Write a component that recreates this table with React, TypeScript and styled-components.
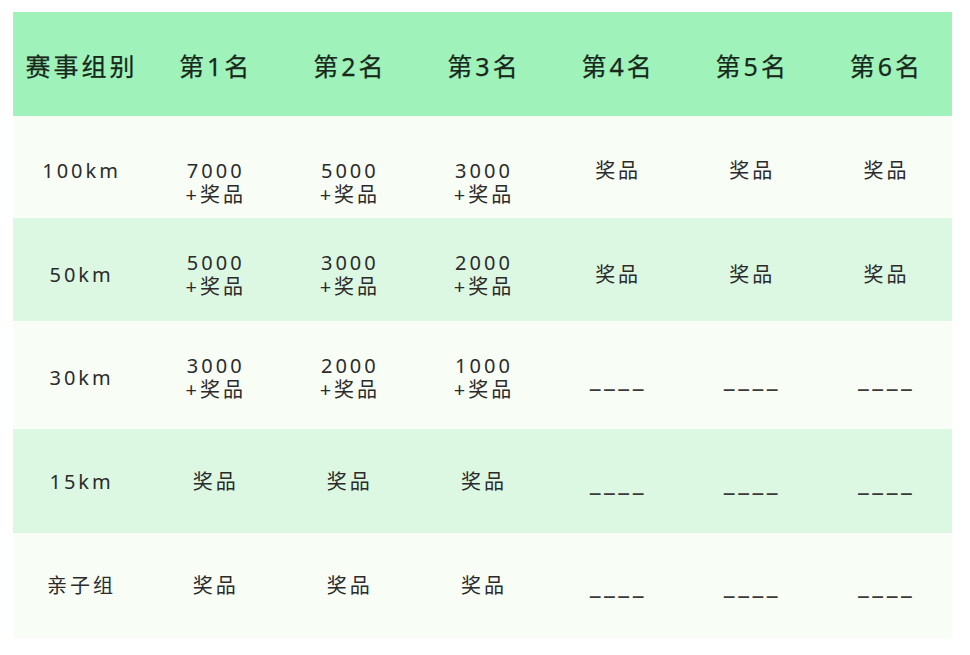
import React from 'react'
import styled, { createGlobalStyle } from 'styled-components'

const GlobalStyle = createGlobalStyle`
  html, body {
    margin: 0;
    padding: 0;
    background: #ffffff;
  }
  body {
    font-family: "Noto Sans", "Noto Sans CJK SC", sans-serif;
  }
`

const header = ['赛事组别', '第1名', '第2名', '第3名', '第4名', '第5名', '第6名']

type Row = {
  cells: string[][]
  height: number
  pad: number
  top?: boolean
  shade: 'light' | 'green'
}

const NONE = ['____']
const PRIZE = ['奖品']

const rows: Row[] = [
  {
    cells: [['100km'], ['7000', '+奖品'], ['5000', '+奖品'], ['3000', '+奖品'], PRIZE, PRIZE, PRIZE],
    height: 102,
    pad: 43,
    top: true,
    shade: 'light',
  },
  {
    cells: [['50km'], ['5000', '+奖品'], ['3000', '+奖品'], ['2000', '+奖品'], PRIZE, PRIZE, PRIZE],
    height: 103,
    pad: 10,
    shade: 'green',
  },
  {
    cells: [['30km'], ['3000', '+奖品'], ['2000', '+奖品'], ['1000', '+奖品'], NONE, NONE, NONE],
    height: 108,
    pad: 6,
    shade: 'light',
  },
  {
    cells: [['15km'], PRIZE, PRIZE, PRIZE, NONE, NONE, NONE],
    height: 104,
    pad: 2,
    shade: 'green',
  },
  {
    cells: [['亲子组'], PRIZE, PRIZE, PRIZE, NONE, NONE, NONE],
    height: 105,
    pad: 0,
    shade: 'light',
  },
]

const App = () => {
  return (
    <Page>
      <GlobalStyle />
      <Table>
        <HeadRow>
          {header.map((h) => (
            <HeadCell key={h}>{h}</HeadCell>
          ))}
        </HeadRow>
        {rows.map((r, i) => (
          <BodyRow key={i} $h={r.height} $pad={r.pad} $top={r.top} $shade={r.shade}>
            {r.cells.map((lines, j) => (
              <Cell key={j}>
                {lines.map((l, k) =>
                  l === '____' ? <Dash key={k}>{l}</Dash> : <Line key={k}>{l}</Line>
                )}
              </Cell>
            ))}
          </BodyRow>
        ))}
      </Table>
    </Page>
  )
}

export default App

const Page = styled.div`
  padding: 12px 18px 0 13px;
  width: 970px;
  box-sizing: border-box;
`

const Table = styled.div`
  display: flex;
  flex-direction: column;
  width: 939px;
`

const HeadRow = styled.div`
  display: grid;
  grid-template-columns: repeat(7, 1fr);
  align-items: center;
  height: 104px;
  padding-top: 4px;
  box-sizing: border-box;
  background: #9ff3ba;
`

const HeadCell = styled.div`
  text-align: center;
  font-size: 25px;
  font-weight: 400;
  letter-spacing: 3px;
  text-indent: 3px;
  color: #18291c;
  line-height: 30px;
  -webkit-text-stroke: 0.25px #18291c;
`

const BodyRow = styled.div<{ $h: number; $pad: number; $top?: boolean; $shade: 'light' | 'green' }>`
  display: grid;
  grid-template-columns: repeat(7, 1fr);
  align-items: ${(p) => (p.$top ? 'start' : 'center')};
  height: ${(p) => p.$h}px;
  padding-top: ${(p) => p.$pad}px;
  box-sizing: border-box;
  background: ${(p) => (p.$shade === 'light' ? '#f8fdf6' : '#ddf8e2')};
`

const Cell = styled.div`
  display: flex;
  flex-direction: column;
  align-items: center;
  color: #2b2b2b;
  font-size: 20px;
  letter-spacing: 3px;
  text-indent: 3px;
`

const Line = styled.div`
  line-height: 24px;
  white-space: nowrap;
`

const Dash = styled(Line)`
  font-family: "Noto Sans CJK SC", sans-serif;
  font-weight: 700;
  color: #3a3a3a;
  letter-spacing: 3px;
  padding-top: 3px;
`
